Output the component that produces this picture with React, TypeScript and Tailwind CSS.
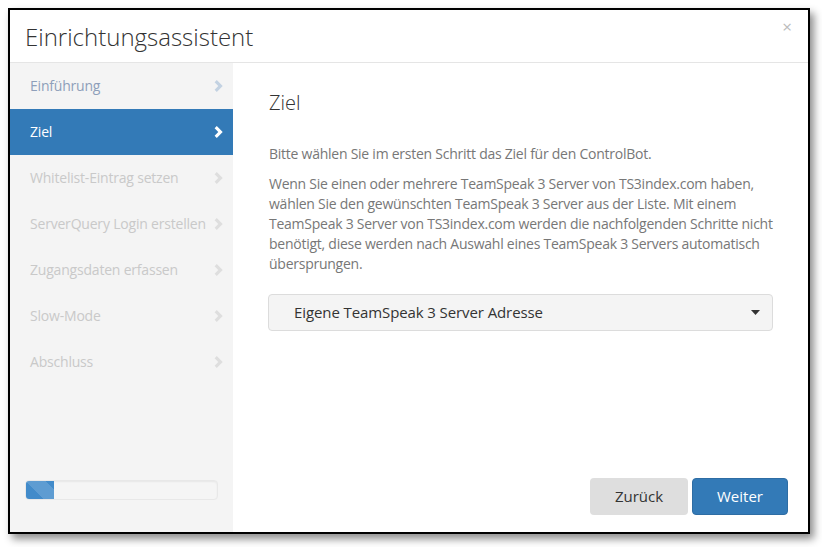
import React from "react";

const Chevron = ({ color }: { color: string }) => (
  <svg width="9" height="12" viewBox="0 0 9 12" aria-hidden>
    <path d="M0.6 2.3 L2.8 0.1 L8.7 6 L2.8 11.9 L0.6 9.7 L4.3 6 Z" fill={color} />
  </svg>
);

const steps = [
  { label: "Einführung", state: "done" },
  { label: "Ziel", state: "active" },
  { label: "Whitelist-Eintrag setzen", state: "todo" },
  { label: "ServerQuery Login erstellen", state: "todo" },
  { label: "Zugangsdaten erfassen", state: "todo" },
  { label: "Slow-Mode", state: "todo" },
  { label: "Abschluss", state: "todo" },
];

export default function App() {
  return (
    <div
      className="w-[822px] h-[547px] bg-white pl-[8px] pt-[8px]"
      style={{ fontFamily: '"Open Sans", "Noto Sans", sans-serif' }}
    >
      <div className="w-[802px] h-[526px] border-2 border-black bg-white flex flex-col shadow-[4px_5px_8px_rgba(0,0,0,0.45)]">
        {/* Header */}
        <div className="h-[53px] border-b border-[#e5e5e5] flex items-start justify-between pl-[15px] pr-[16px] shrink-0">
          <div className="text-[24px] font-light text-[#333] leading-none pt-[15px] tracking-[0px]">
            Einrichtungsassistent
          </div>
          <div className="text-[17px] leading-none text-[#bbb] pt-[8px]">×</div>
        </div>
        {/* Body */}
        <div className="flex flex-1 min-h-0">
          {/* Sidebar */}
          <div className="w-[223px] bg-[#f4f4f4] flex flex-col shrink-0">
            {steps.map((s) => (
              <div
                key={s.label}
                className={
                  "h-[46px] flex items-center justify-between pl-[20px] pr-[10px] pb-[1px] text-[14px] " +
                  (s.state === "active"
                    ? "bg-[#337ab7] text-white"
                    : s.state === "done"
                    ? "text-[#8e9fba]"
                    : "text-[#c9c9c9]")
                }
              >
                <span className="tracking-[-0.2px]">{s.label}</span>
                <Chevron
                  color={
                    s.state === "active"
                      ? "#ffffff"
                      : s.state === "done"
                      ? "#c3d2e2"
                      : "#dedede"
                  }
                />
              </div>
            ))}
            <div className="mt-auto mb-[32px] ml-[15px] w-[193px] h-[20px] rounded-[4px] bg-[#f5f5f5] border border-[#e8e8e8] shadow-[inset_0_1px_2px_rgba(0,0,0,0.06)] overflow-hidden">
              <div
                className="h-full w-[28px] bg-[#428bca]"
                style={{
                  backgroundImage:
                    "linear-gradient(45deg, rgba(255,255,255,0.15) 25%, transparent 25%, transparent 50%, rgba(255,255,255,0.15) 50%, rgba(255,255,255,0.15) 75%, transparent 75%, transparent)",
                  backgroundSize: "40px 40px",
                }}
              />
            </div>
          </div>
          {/* Content */}
          <div className="flex-1 flex flex-col pl-[36px] pr-[35px] pt-[26px]">
            <div className="text-[20px] font-light text-[#333] leading-[28px]">Ziel</div>
            <p className="mt-[27px] text-[14px] leading-[20px] text-[#777] tracking-[-0.25px]">
              Bitte wählen Sie im ersten Schritt das Ziel für den ControlBot.
            </p>
            <p className="mt-[10px] mr-[-8px] text-[14px] leading-[20px] text-[#777] tracking-[-0.25px]">
              Wenn Sie einen oder mehrere TeamSpeak 3 Server von TS3index.com haben, wählen Sie den
              gewünschten TeamSpeak 3 Server aus der Liste. Mit einem TeamSpeak 3 Server von
              TS3index.com werden die nachfolgenden Schritte nicht benötigt, diese werden nach
              Auswahl eines TeamSpeak 3 Servers automatisch übersprungen.
            </p>
            <div className="mt-[20px] ml-[-1px] h-[37px] rounded-[4px] border border-[#dcdcdc] bg-[#f4f4f4] flex items-center justify-between pl-[25px] pr-[12px]">
              <span className="text-[15px] text-[#333] tracking-[-0.1px]">
                Eigene TeamSpeak 3 Server Adresse
              </span>
              <svg width="9" height="5" viewBox="0 0 9 5" aria-hidden>
                <path d="M0 0 H9 L4.5 5 Z" fill="#333" />
              </svg>
            </div>
            <div className="mt-auto mb-[17px] mr-[-15px] flex justify-end gap-[4px]">
              <button className="w-[98px] h-[37px] rounded-[4px] bg-[#dedede] text-[15px] text-[#333]">
                Zurück
              </button>
              <button className="w-[96px] h-[37px] rounded-[4px] bg-[#337ab7] border border-[#2e6da4] text-[15px] text-white">
                Weiter
              </button>
            </div>
          </div>
        </div>
      </div>
    </div>
  );
}
